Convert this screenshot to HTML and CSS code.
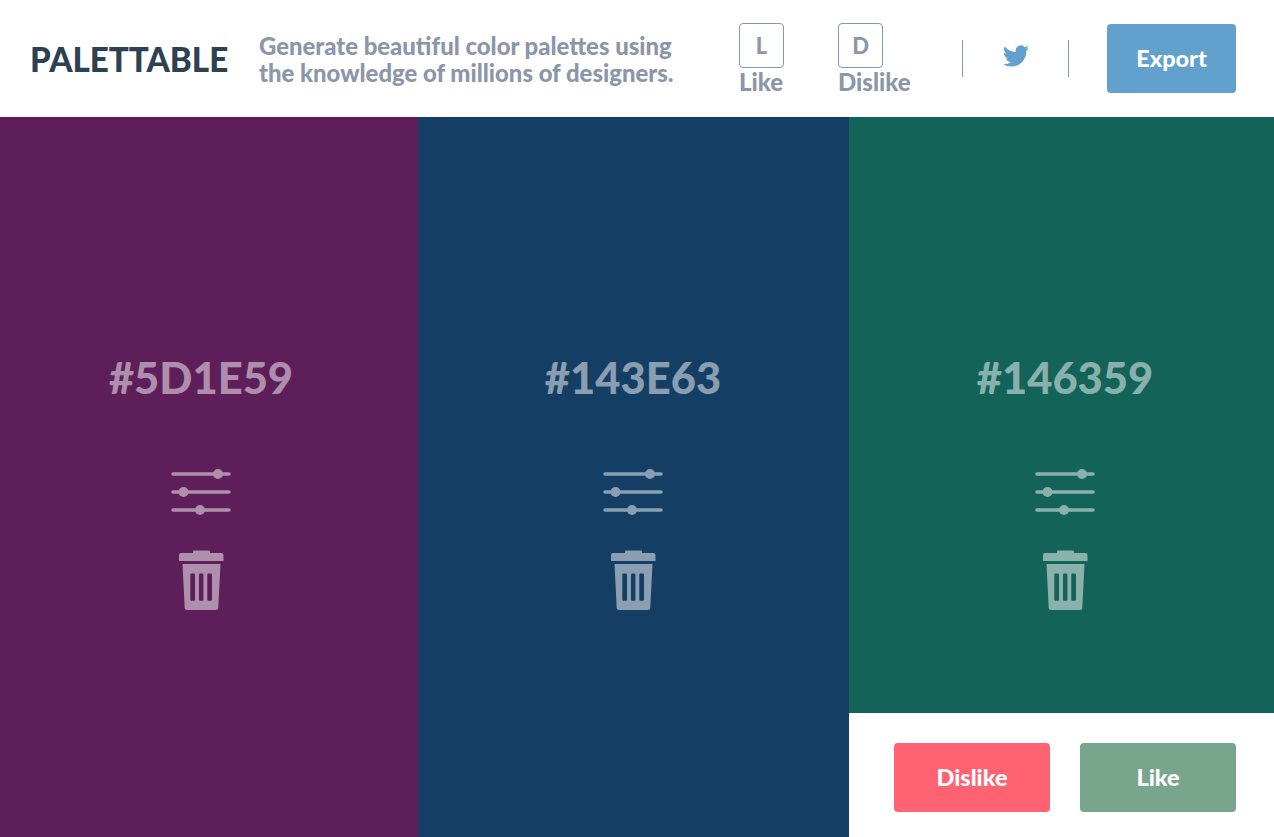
FILE: index.html
```html
<!DOCTYPE html>
<html lang="en">
<head>
<meta charset="utf-8">
<title>Palettable</title>
<link rel="stylesheet" href="styles.css">
</head>
<body>
<header class="header">
  <div class="logo">PALETTABLE</div>
  <p class="tagline">Generate beautiful color palettes using<br>the knowledge of millions of designers.</p>
  <div class="key key-like"><span class="keycap">L</span><span class="keylabel">Like</span></div>
  <div class="key key-dislike"><span class="keycap">D</span><span class="keylabel">Dislike</span></div>
  <div class="social">
    <svg class="bird" viewBox="0 0 24 24" width="26" height="26"><path fill="#62a0cd" d="M23.95 4.57a10 10 0 0 1-2.83.78 4.96 4.96 0 0 0 2.17-2.72 9.9 9.9 0 0 1-3.13 1.19 4.92 4.92 0 0 0-8.38 4.48A13.98 13.98 0 0 1 1.64 3.16a4.92 4.92 0 0 0 1.52 6.57 4.9 4.9 0 0 1-2.23-.62v.06a4.92 4.92 0 0 0 3.95 4.83 5 5 0 0 1-2.21.08 4.94 4.94 0 0 0 4.6 3.42A9.87 9.87 0 0 1 0 19.54a14 14 0 0 0 7.56 2.21c9.05 0 14-7.5 14-13.98l-.01-.64a9.9 9.9 0 0 0 2.4-2.56z"/></svg>
  </div>
  <button class="btn btn-export">Export</button>
</header>
<main class="palette">
  <section class="swatch swatch-purple">
    <div class="hex">#5D1E59</div>
    <svg class="sliders" viewBox="0 0 60 42" width="60" height="42"><path d="M2 2h56M2 20h56M2 38h56" stroke="#fff" stroke-width="3.500" stroke-linecap="round"/><circle cx="47" cy="2" r="5" fill="#fff"/><circle cx="12.500" cy="20" r="5" fill="#fff"/><circle cx="29" cy="38" r="5" fill="#fff"/></svg>
    <svg class="trash" viewBox="0 0 45 60" width="45" height="60"><path fill="#fff" fill-rule="evenodd" d="M14 1.500a1 1 0 0 1 1-1h15a1 1 0 0 1 1 1v1.500h11.500a2 2 0 0 1 2 2v6H0V5a2 2 0 0 1 2-2h12zM3.500 14h38l-2.200 43.500a2.500 2.500 0 0 1-2.500 2.500H8.200a2.500 2.500 0 0 1-2.500-2.500zM12.300 23.500a1 1 0 0 0-1 1v25.200a1 1 0 0 0 1 1h2.700a1 1 0 0 0 1-1V24.500a1 1 0 0 0-1-1zM21 23.500a1 1 0 0 0-1 1v25.200a1 1 0 0 0 1 1h2.400a1 1 0 0 0 1-1V24.500a1 1 0 0 0-1-1zM29.300 23.500a1 1 0 0 0-1 1v25.200a1 1 0 0 0 1 1h2.700a1 1 0 0 0 1-1V24.500a1 1 0 0 0-1-1z"/></svg>
  </section>
  <section class="swatch swatch-blue">
    <div class="hex">#143E63</div>
    <svg class="sliders" viewBox="0 0 60 42" width="60" height="42"><path d="M2 2h56M2 20h56M2 38h56" stroke="#fff" stroke-width="3.500" stroke-linecap="round"/><circle cx="47" cy="2" r="5" fill="#fff"/><circle cx="12.500" cy="20" r="5" fill="#fff"/><circle cx="29" cy="38" r="5" fill="#fff"/></svg>
    <svg class="trash" viewBox="0 0 45 60" width="45" height="60"><path fill="#fff" fill-rule="evenodd" d="M14 1.500a1 1 0 0 1 1-1h15a1 1 0 0 1 1 1v1.500h11.500a2 2 0 0 1 2 2v6H0V5a2 2 0 0 1 2-2h12zM3.500 14h38l-2.200 43.500a2.500 2.500 0 0 1-2.500 2.500H8.200a2.500 2.500 0 0 1-2.500-2.500zM12.300 23.500a1 1 0 0 0-1 1v25.200a1 1 0 0 0 1 1h2.700a1 1 0 0 0 1-1V24.500a1 1 0 0 0-1-1zM21 23.500a1 1 0 0 0-1 1v25.200a1 1 0 0 0 1 1h2.400a1 1 0 0 0 1-1V24.500a1 1 0 0 0-1-1zM29.300 23.500a1 1 0 0 0-1 1v25.200a1 1 0 0 0 1 1h2.700a1 1 0 0 0 1-1V24.500a1 1 0 0 0-1-1z"/></svg>
  </section>
  <div class="last">
    <section class="swatch swatch-green">
      <div class="hex">#146359</div>
      <svg class="sliders" viewBox="0 0 60 42" width="60" height="42"><path d="M2 2h56M2 20h56M2 38h56" stroke="#fff" stroke-width="3.500" stroke-linecap="round"/><circle cx="47" cy="2" r="5" fill="#fff"/><circle cx="12.500" cy="20" r="5" fill="#fff"/><circle cx="29" cy="38" r="5" fill="#fff"/></svg>
      <svg class="trash" viewBox="0 0 45 60" width="45" height="60"><path fill="#fff" fill-rule="evenodd" d="M14 1.500a1 1 0 0 1 1-1h15a1 1 0 0 1 1 1v1.500h11.500a2 2 0 0 1 2 2v6H0V5a2 2 0 0 1 2-2h12zM3.500 14h38l-2.200 43.500a2.500 2.500 0 0 1-2.500 2.500H8.200a2.500 2.500 0 0 1-2.500-2.500zM12.300 23.500a1 1 0 0 0-1 1v25.200a1 1 0 0 0 1 1h2.700a1 1 0 0 0 1-1V24.500a1 1 0 0 0-1-1zM21 23.500a1 1 0 0 0-1 1v25.200a1 1 0 0 0 1 1h2.400a1 1 0 0 0 1-1V24.500a1 1 0 0 0-1-1zM29.300 23.500a1 1 0 0 0-1 1v25.200a1 1 0 0 0 1 1h2.700a1 1 0 0 0 1-1V24.500a1 1 0 0 0-1-1z"/></svg>
    </section>
    <div class="actions">
      <button class="btn btn-dislike">Dislike</button>
      <button class="btn btn-like">Like</button>
    </div>
  </div>
</main>
</body>
</html>
```
FILE: styles.css
```css
* { box-sizing: border-box; }
html, body { margin: 0; height: 100%; }
body {
  width: 1274px;
  height: 837px;
  overflow: hidden;
  display: flex;
  flex-direction: column;
  font-family: Lato, "Open Sans", sans-serif;
  font-weight: 900;
  background: #fff;
}
.header {
  height: 117px;
  flex: none;
  display: flex;
  align-items: flex-start;
  padding-left: 30px;
  color: #8b96aa;
}
.logo {
  width: 229px;
  margin-top: 39px;
  font-size: 33.200px;
  line-height: 40px;
  color: #2e4152;
}
.tagline {
  width: 480px;
  margin: 32px 0 0;
  font-size: 23.900px;
  line-height: 27px;
}
.key {
  display: flex;
  flex-direction: column;
  align-items: flex-start;
  margin-top: 23px;
}
.key-like { width: 99px; }
.key-dislike { width: 124px; }
.keycap {
  width: 45px;
  height: 45px;
  border: 1px solid #8b96aa;
  border-radius: 4px;
  display: flex;
  align-items: center;
  justify-content: center;
  font-size: 22px;
}
.keylabel {
  font-size: 24px;
  line-height: 28px;
}
.social {
  width: 107px;
  height: 37px;
  margin-top: 40px;
  border-left: 1px solid #8b96aa;
  border-right: 1px solid #8b96aa;
  display: flex;
  justify-content: center;
  align-items: flex-start;
}
.bird { margin-top: 3px; }
.btn {
  border: 0;
  border-radius: 4px;
  color: #fff;
  font: inherit;
  font-size: 23.500px;
  height: 69px;
  padding: 0 0 2px;
}
.btn-export {
  width: 129px;
  margin: 24px 0 0 38px;
  background: #62a0cd;
}
.palette {
  flex: 1;
  display: grid;
  grid-template-columns: 418px 431px 425px;
  min-height: 0;
}
.swatch {
  display: flex;
  flex-direction: column;
  align-items: center;
  padding-top: 231px;
  color: rgba(255, 255, 255, 0.5);
}
.swatch-purple { background: #5d1e59; padding-right: 16px; }
.swatch-blue { background: #143e63; padding-right: 1px; }
.swatch-green { background: #146359; height: 596px; padding-left: 7px; }
.hex {
  font-size: 43.500px;
  line-height: 58px;
}
.sliders { margin-top: 66px; opacity: 0.5; overflow: visible; }
.trash { margin-top: 36px; opacity: 0.5; }
.last { display: flex; flex-direction: column; }
.actions {
  flex: 1;
  display: flex;
  justify-content: flex-end;
  gap: 30px;
  padding: 30px 38px 0 0;
}
.btn-dislike, .btn-like { width: 156px; }
.btn-dislike { background: #ff6371; }
.btn-like { background: #78a68d; }
```
